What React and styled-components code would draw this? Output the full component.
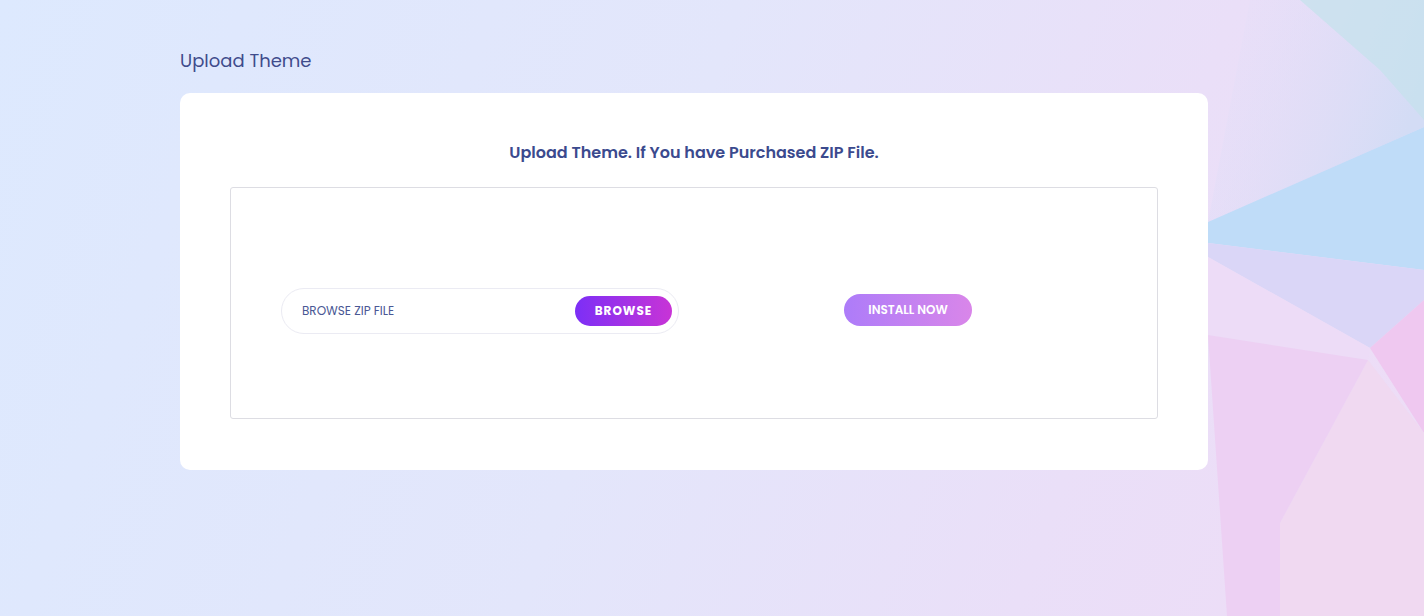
import React from 'react';
import styled, { createGlobalStyle } from 'styled-components';

const GlobalStyle = createGlobalStyle`
  html, body {
    margin: 0;
    height: 100%;
    font-family: 'Poppins', 'Noto Sans', 'Open Sans', sans-serif;
  }
  #root {
    min-height: 100%;
  }
`;

// low-poly shards that sit on the right edge of the page background
const shards = [
  { points: '1250,0 1424,0 1424,127 1208,222', fill: 'url(#topFade)' },
  { points: '1300,0 1424,0 1424,120 1380,70', fill: '#c6e2ec', opacity: 0.75 },
  { points: '1208,222 1424,127 1424,270 1208,243', fill: '#bfdcf8' },
  { points: '1208,243 1424,270 1424,300 1370,348 1208,257', fill: '#dad6f7' },
  { points: '1208,257 1370,348 1368,360 1208,335', fill: '#eddcf7' },
  { points: '1370,348 1424,300 1424,433', fill: '#efc8f0' },
  { points: '1368,360 1424,433 1424,616 1280,616 1280,523', fill: '#f0d9f1' },
  { points: '1208,335 1368,360 1280,523 1280,616 1227,616', fill: '#edd0f3' },
];

const Page = styled.div`
  position: relative;
  min-height: 616px;
  overflow: hidden;
  background: linear-gradient(110deg, #dde9fe 0%, #e3e6fb 45%, #eadff8 75%, #eedcf6 100%);
`;

const Backdrop = styled.svg`
  position: absolute;
  inset: 0;
  width: 100%;
  height: 100%;
  pointer-events: none;
`;

const Content = styled.main`
  position: relative;
  width: 1028px;
  padding: 49px 0 0 180px;
`;

const PageTitle = styled.h2`
  margin: 0 0 20px;
  font-size: 18px;
  font-weight: 400;
  line-height: 24px;
  color: #3f4c8c;
`;

const Card = styled.section`
  background: #fff;
  border-radius: 10px;
  padding: 48px 50px 51px;
`;

const CardHeading = styled.h3`
  margin: 0 0 22px;
  text-align: center;
  font-size: 16px;
  font-weight: 600;
  line-height: 24px;
  color: #3b4a8e;
`;

const UploadBox = styled.div`
  height: 232px;
  border: 1px solid #dddde3;
  border-radius: 3px;
  display: flex;
  align-items: center;
  padding: 16px 0 0 50px;
  box-sizing: border-box;
  gap: 165px;
`;

const FileField = styled.label`
  width: 398px;
  height: 46px;
  box-sizing: border-box;
  border: 1px solid #ebebf3;
  border-radius: 23px;
  display: flex;
  align-items: center;
  justify-content: space-between;
  padding: 0 6px 0 20px;
`;

const FileLabel = styled.span`
  font-size: 12px;
  color: #4a5894;
  text-transform: uppercase;
`;

const PillButton = styled.button`
  border: none;
  border-radius: 16px;
  color: #fff;
  font-family: inherit;
  text-transform: uppercase;
  cursor: pointer;
  height: ${({ $tall }) => ($tall ? '32px' : '30px')};
  margin-bottom: ${({ $tall }) => ($tall ? '2px' : '0')};
  width: ${({ $width }) => $width}px;
  font-size: 12px;
  font-weight: ${({ $bold }) => ($bold ? 700 : 600)};
  letter-spacing: ${({ $bold }) => ($bold ? '1px' : '0')};
  background: ${({ $soft }) =>
    $soft
      ? 'linear-gradient(90deg, #ad7cf9 0%, #d986e9 100%)'
      : 'linear-gradient(90deg, #7c2ff6 0%, #c834d6 100%)'};
`;

export default function App() {
  return (
    <>
      <GlobalStyle />
      <Page>
        <Backdrop viewBox="0 0 1424 616" preserveAspectRatio="none">
          <defs>
            <linearGradient id="topFade" x1="0" y1="0" x2="1" y2="0.4">
              <stop offset="0" stopColor="#e2def8" stopOpacity="0" />
              <stop offset="1" stopColor="#d3dcf5" />
            </linearGradient>
          </defs>
          {shards.map((s) => (
            <polygon key={s.points} points={s.points} fill={s.fill} opacity={s.opacity ?? 1} />
          ))}
        </Backdrop>
        <Content>
          <PageTitle>Upload Theme</PageTitle>
          <Card>
            <CardHeading>Upload Theme. If You have Purchased ZIP File.</CardHeading>
            <UploadBox>
              <FileField>
                <FileLabel>Browse ZIP File</FileLabel>
                <PillButton type="button" $width={97} $bold>Browse</PillButton>
              </FileField>
              <PillButton type="button" $width={128} $tall $soft>Install Now</PillButton>
            </UploadBox>
          </Card>
        </Content>
      </Page>
    </>
  );
}
